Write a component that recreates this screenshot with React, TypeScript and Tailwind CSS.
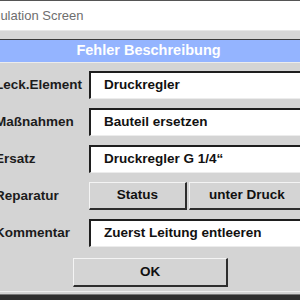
// Fehler Beschreibung dialog (cropped simulation window)

const FONT = "font-['Liberation_Sans',Arial,sans-serif]";

function FieldRow({ label, value }: { label: string; value: string }) {
  return (
    <div className="flex h-[28px] items-center">
      <span className="ml-[-5px] w-[94px] shrink-0 text-[13.5px] font-bold text-[#1c1c1c]">
        {label}
      </span>
      <div className="flex h-full flex-1 items-center border-t-2 border-l-2 border-b border-t-[#1e1e1e] border-l-[#1e1e1e] border-b-[#ececec] bg-white pl-[13px] mr-[-2px]">
        <span className="text-[13.5px] font-bold text-[#111]">{value}</span>
      </div>
    </div>
  );
}

function RaisedButton({
  label,
  className,
}: {
  label: string;
  className: string;
}) {
  return (
    <div
      className={`flex h-full items-center justify-center border-t border-l border-b-2 border-r-2 border-t-[#f4f4f4] border-l-[#f4f4f4] border-b-[#2e2e2e] border-r-[#2e2e2e] bg-[#d4d4d4] ${className}`}
    >
      <span className="text-[13.5px] font-bold text-[#111]">{label}</span>
    </div>
  );
}

export default function App() {
  return (
    <div
      className={`flex h-[300px] w-[300px] flex-col overflow-hidden bg-[#d4d4d4] ${FONT}`}
    >
      {/* title bar */}
      <div className="flex h-[30px] shrink-0 items-center border-t border-[#555] bg-white">
        <span className="ml-[-22px] whitespace-nowrap text-[13px] text-[#6e6e6e]">
          Simulation Screen
        </span>
      </div>

      <div className="h-[9px] shrink-0 border-t border-[#e6e6e6] bg-[#d6d6d6]" />

      {/* header */}
      <div className="flex h-[24px] shrink-0 items-center justify-center border-t border-b border-t-[#3a3a3a] border-b-[#ececec] bg-[#94b4ff] pr-[3px]">
        <span className="text-[14.5px] font-bold text-white">
          Fehler Beschreibung
        </span>
      </div>

      {/* form */}
      <div className="flex flex-col gap-[9px] pt-[8px]">
        <FieldRow label="Leck.Element" value="Druckregler" />
        <FieldRow label="Maßnahmen" value="Bauteil ersetzen" />
        <FieldRow label="Ersatz" value="Druckregler G 1/4“" />

        <div className="flex h-[28px] items-center">
          <span className="ml-[-5px] w-[94px] shrink-0 text-[13.5px] font-bold text-[#1c1c1c]">
            Reparatur
          </span>
          <div className="flex h-full flex-1 gap-[2px]">
            <RaisedButton label="Status" className="w-[98px] shrink-0" />
            <RaisedButton label="unter Druck" className="w-[117px] shrink-0" />
          </div>
        </div>

        <FieldRow label="Kommentar" value="Zuerst Leitung entleeren" />

        <div className="mt-[2px] flex h-[29px]">
          <RaisedButton label="OK" className="ml-[73px] w-[155px]" />
        </div>
      </div>

      {/* bottom frame */}
      <div className="mt-[4px] h-[3px] shrink-0 border-t border-[#efefef]" />
      <div className="flex-1 border-t border-[#777] bg-[#2f2f2f]" />
    </div>
  );
}
